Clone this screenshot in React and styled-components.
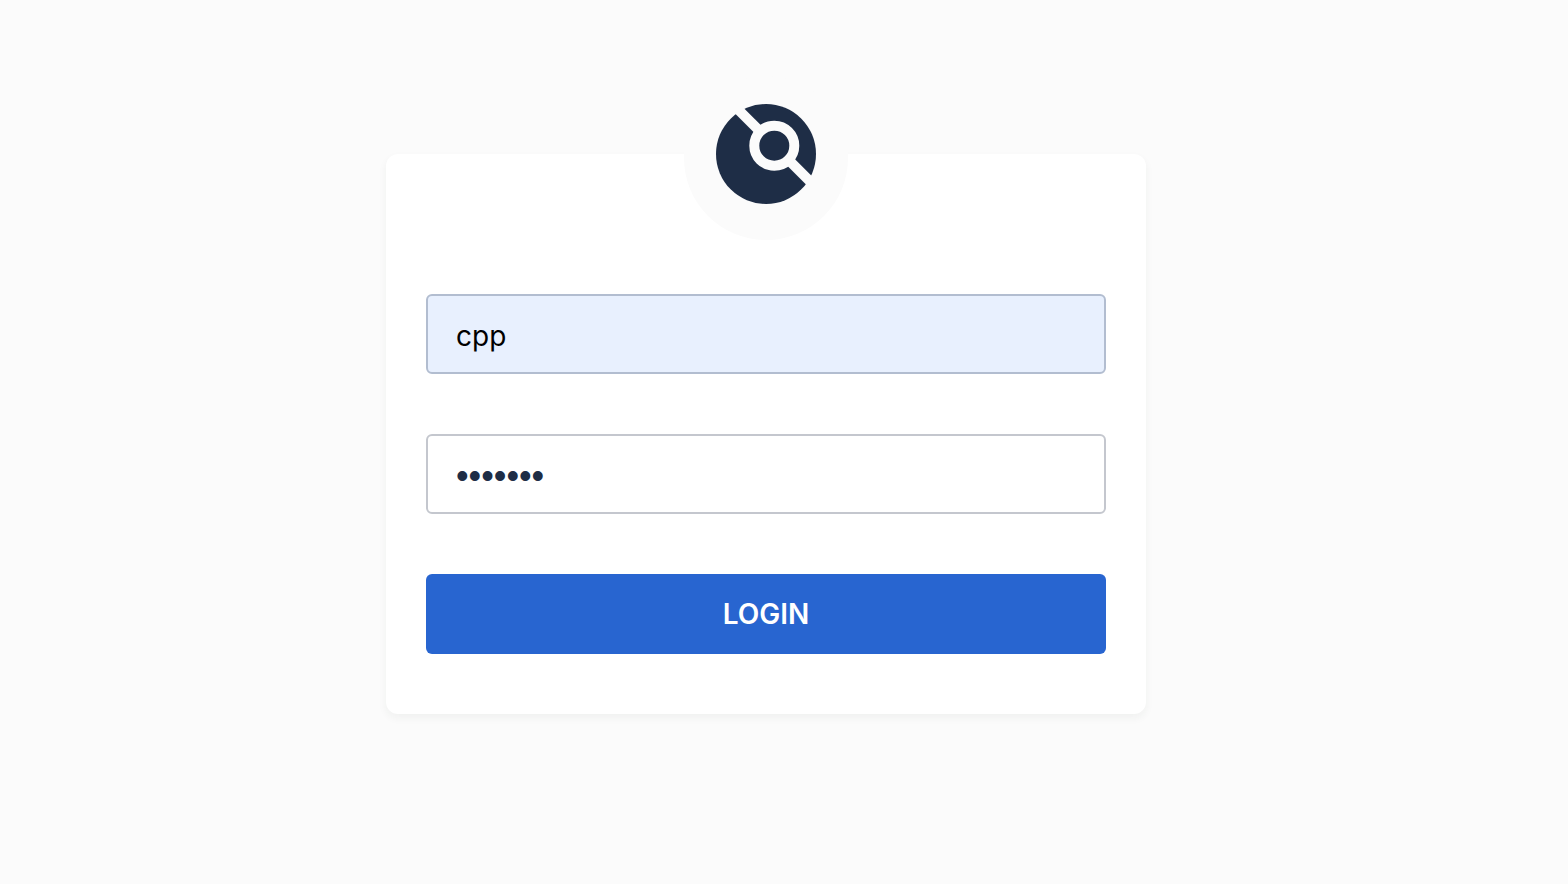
import React from "react";
import styled, { createGlobalStyle } from "styled-components";

const GlobalStyle = createGlobalStyle`
  *, *::before, *::after { box-sizing: border-box; }
  body {
    margin: 0;
    background: #fbfbfb;
    color: #1e2d46;
    font-family: Inter, "Liberation Sans", sans-serif;
  }
`;

const Page = styled.main`
  display: flex;
  justify-content: center;
  align-items: flex-start;
  min-height: 100vh;
  padding: 154px 36px 80px 0;
`;

const Card = styled.form`
  position: relative;
  display: flex;
  flex-direction: column;
  gap: 60px;
  width: 100%;
  max-width: 760px;
  padding: 140px 40px 60px;
  border-radius: 12px;
  background: #fff;
  box-shadow: 0 4px 8px rgba(30, 50, 46, 0.05);
`;

const Badge = styled.div`
  position: absolute;
  top: -78px;
  left: 50%;
  display: flex;
  justify-content: center;
  width: 164px;
  height: 164px;
  margin-left: -82px;
  padding-top: 28px;
  border-radius: 50%;
  background: #fbfbfb;
`;

const Field = styled.input`
  display: block;
  width: 100%;
  height: 80px;
  padding: 4px 28px 0;
  border: 2px solid ${(p) => (p.$filled ? "#b2bdd0" : "#c4c7ce")};
  border-radius: 6px;
  outline: none;
  background: ${(p) => (p.$filled ? "#e8f0fe" : "#fff")};
  color: ${(p) => (p.$filled ? "#000" : "#1e2d46")};
  font: 400 28px/34px Inter, "Liberation Sans", sans-serif;
`;

const PasswordField = styled(Field)`
  font: 400 36px/40px "Liberation Sans", sans-serif;
`;

const SubmitButton = styled.button`
  width: 100%;
  height: 80px;
  padding: 0;
  border: 0;
  border-radius: 6px;
  background: #2865d0;
  color: #fff;
  font: 600 28px/34px Inter, "Liberation Sans", sans-serif;
  cursor: pointer;
`;

function Logo() {
  return (
    <svg width="100" height="100" viewBox="0 0 100 100" role="img" aria-label="Logo">
      <circle cx="50" cy="50" r="50" fill="#1e2d46" />
      <path d="M8.3 -8.3L108.3 91.7" stroke="#fbfbfb" strokeWidth="10" />
      <circle cx="58.3" cy="41.7" r="20" fill="#1e2d46" stroke="#fbfbfb" strokeWidth="10" />
    </svg>
  );
}

export default function App() {
  return (
    <>
      <GlobalStyle />
      <Page>
        <Card onSubmit={(e) => e.preventDefault()}>
          <Badge>
            <Logo />
          </Badge>
          <Field $filled type="text" aria-label="Username" autoComplete="username" defaultValue="cpp" />
          <PasswordField type="password" aria-label="Password" autoComplete="current-password" defaultValue="letmein" />
          <SubmitButton type="submit">LOGIN</SubmitButton>
        </Card>
      </Page>
    </>
  );
}
